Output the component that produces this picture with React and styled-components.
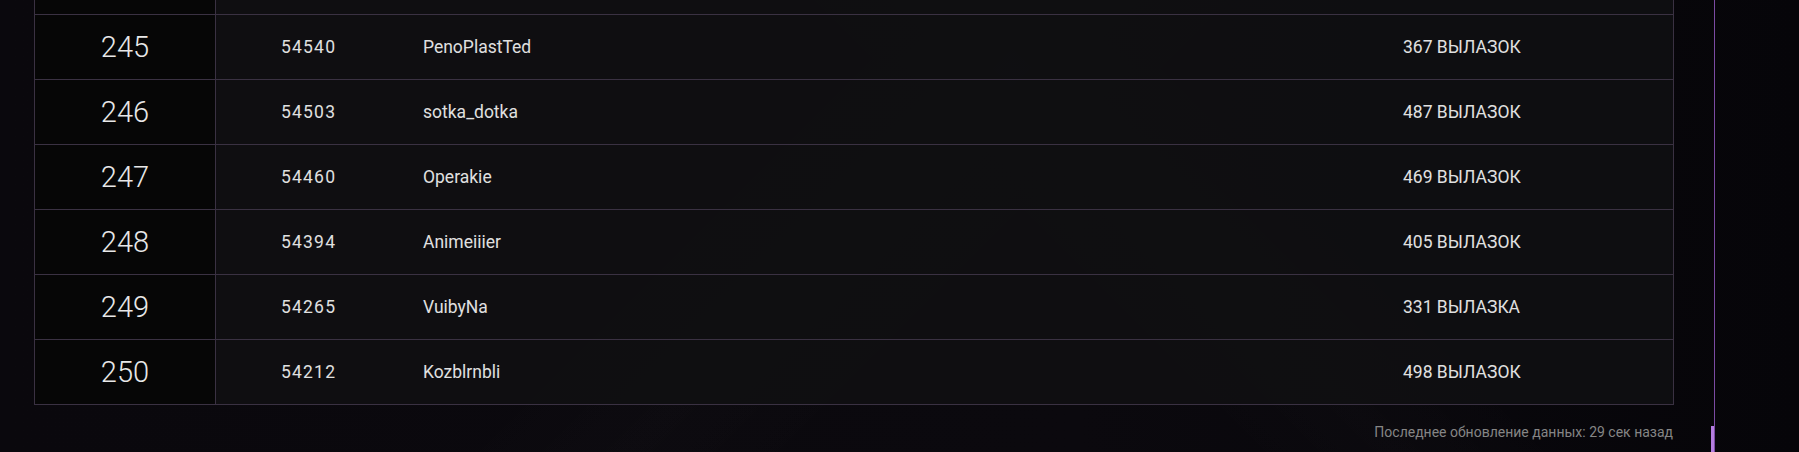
import React, { useLayoutEffect, useRef } from "react";
import styled, { createGlobalStyle } from "styled-components";

const GlobalStyle = createGlobalStyle`
	html, body {
		margin: 0;
		padding: 0;
		height: 100%;
		overflow: hidden;
	}
	body {
		font-family: "Roboto", "Noto Sans", sans-serif;
		background:
			linear-gradient(135deg, transparent 40%, rgba(255, 255, 255, 0.012) 48%, transparent 56%),
			linear-gradient(45deg, transparent 55%, rgba(255, 255, 255, 0.012) 62%, transparent 70%),
			linear-gradient(90deg, #0a080d 0%, #0b090e 60%, #060509 100%);
	}
`;

const Page = styled.div`
	display: flex;
	height: 100vh;
`;

const Panel = styled.div`
	display: flex;
	width: 1715px;
	height: 100%;
	border-right: 1px solid #7b4aa3;
	box-sizing: border-box;
`;

const Content = styled.div`
	flex: 1;
	display: flex;
	flex-direction: column;
	padding-left: 34px;
`;

const Track = styled.div`
	width: 3px;
	display: flex;
	flex-direction: column;
	justify-content: flex-end;
`;

const Thumb = styled.div`
	height: 26px;
	background: #b47ddf;
`;

const TableScroll = styled.div`
	width: 1640px;
	height: 405px;
	box-sizing: border-box;
	overflow-y: auto;
	border-bottom: 1px solid #3a3142;
	&::-webkit-scrollbar {
		width: 3px;
	}
	&::-webkit-scrollbar-track {
		background: transparent;
	}
	&::-webkit-scrollbar-thumb {
		background: #6a4b8a;
		min-height: 14px;
	}
`;

const Row = styled.div`
	display: grid;
	grid-template-columns: 181px 207px 980px 1fr;
	height: 65px;
	box-sizing: border-box;
	border-top: 1px solid #3a3142;
	border-left: 1px solid #3a3142;
	border-right: 1px solid #3a3142;
	background: rgba(16, 16, 18, 0.9);
`;

const Place = styled.div`
	display: flex;
	align-items: center;
	justify-content: center;
	background: #060606;
	border-right: 1px solid #3a3142;
	color: #e8e8e8;
	font-size: 29px;
	font-weight: 300;
`;

const Cell = styled.div`
	display: flex;
	align-items: center;
	padding-left: ${(p) => p.$pad || 0}px;
	letter-spacing: ${(p) => p.$spacing || 0}px;
	color: #e0e0e0;
	font-size: 17.5px;
	white-space: nowrap;
`;

const Footer = styled.div`
	width: 1640px;
	padding-right: 1px;
	box-sizing: border-box;
	margin-top: 19px;
	text-align: right;
	color: #858585;
	font-size: 14px;
	line-height: 16px;
`;

const shown = [
	[245, 54540, "PenoPlastTed", "367 ВЫЛАЗОК"],
	[246, 54503, "sotka_dotka", "487 ВЫЛАЗОК"],
	[247, 54460, "Operakie", "469 ВЫЛАЗОК"],
	[248, 54394, "Animeiiier", "405 ВЫЛАЗОК"],
	[249, 54265, "VuibyNa", "331 ВЫЛАЗКА"],
	[250, 54212, "Kozblrnbli", "498 ВЫЛАЗОК"],
];

// earlier places are above the fold, scrolled past
const names = ["Nightfox", "Kerrin_77", "ToxaPlay", "mrBlinov", "Sanek", "Vortex", "LiraLi", "GrimHook"];
const earlier = Array.from({ length: 244 }, (_, i) => [
	i + 1,
	98000 - i * 180,
	names[i % names.length],
	`${300 + ((i * 37) % 200)} ВЫЛАЗОК`,
]);

export default function App() {
	const scrollRef = useRef(null);

	useLayoutEffect(() => {
		const el = scrollRef.current;
		if (el) el.scrollTop = el.scrollHeight;
	}, []);

	const rows = [...earlier, ...shown];

	return (
		<>
			<GlobalStyle />
			<Page>
				<Panel>
					<Content>
						<TableScroll ref={scrollRef}>
							{rows.map(([place, score, name, trips]) => (
								<Row key={place}>
									<Place>{place}</Place>
									<Cell $pad={65} $spacing={1.2}>{score}</Cell>
									<Cell>{name}</Cell>
									<Cell>{trips}</Cell>
								</Row>
							))}
						</TableScroll>
						<Footer>Последнее обновление данных: 29 сек назад</Footer>
					</Content>
					<Track>
						<Thumb />
					</Track>
				</Panel>
			</Page>
		</>
	);
}
